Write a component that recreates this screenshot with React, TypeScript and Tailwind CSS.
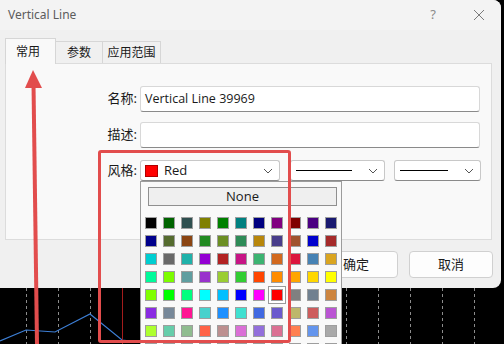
import React from "react";

const palette = [
  ["#000000", "#006400", "#2F4F4F", "#808000", "#008000", "#008080", "#000080", "#800080", "#800000", "#4B0082", "#191970"],
  ["#00008B", "#556B2F", "#8B4513", "#228B22", "#6B8E23", "#2E8B57", "#B8860B", "#483D8B", "#A0522D", "#0000CD", "#A52A2A"],
  ["#00CED1", "#696969", "#20B2AA", "#9400D3", "#B22222", "#C71585", "#3CB371", "#D2691E", "#DC143C", "#4682B4", "#DAA520"],
  ["#00FA9A", "#7CFC00", "#5F9EA0", "#9932CC", "#9ACD32", "#32CD32", "#FF4500", "#FF8C00", "#FFA500", "#FFD700", "#FFFF00"],
  ["#7FFF00", "#00FF00", "#00FF7F", "#00FFFF", "#00BFFF", "#0000FF", "#FF00FF", "#FF0000", "#808080", "#708090", "#CD853F"],
  ["#8A2BE2", "#778899", "#FF1493", "#48D1CC", "#1E90FF", "#40E0D0", "#4169E1", "#6A5ACD", "#BDB76B", "#CD5C5C", "#BA55D3"],
  ["#ADFF2F", "#66CDAA", "#8FBC8F", "#FF6347", "#BC8F8F", "#DA70D6", "#9370DB", "#DB7093", "#FF7F50", "#6495ED", "#A9A9A9"],
  ["#F4A460", "#B0C4DE", "#D2B48C", "#E9967A", "#DEB887", "#FF69B4", "#FA8072", "#EE82EE", "#F08080", "#87CEEB", "#FFA07A"],
];

const gridX = [26, 58, 90, 122, 154, 186, 218, 250, 282, 314, 346, 378, 410, 442, 474];

function Chevron() {
  return (
    <svg width="10" height="6" viewBox="0 0 10 6" className="shrink-0">
      <path d="M1 1 L5 5 L9 1" fill="none" stroke="#555" strokeWidth="1" />
    </svg>
  );
}

function LineSelect({ width, line }: { width: string; line: string }) {
  return (
    <div className={`${width} h-[21px] bg-white border border-[#c8c8c8] border-b-[#8a8a8a] rounded-[3px] flex items-center pl-[5px] pr-[6px] gap-2`}>
      <div className={`${line} h-px bg-black`} />
      <div className="flex-1" />
      <Chevron />
    </div>
  );
}

export default function App() {
  return (
    <div className="relative w-[504px] h-[344px] overflow-hidden bg-black font-['Noto_Sans','Noto_Sans_CJK_SC',sans-serif] text-[#1a1a1a]">
      {/* dialog */}
      <div className="w-[501px] h-[288px] bg-[#f0f0f0] rounded-tr-[8px] rounded-br-[8px] flex flex-col">
        {/* title bar */}
        <div className="h-[30px] bg-[#f3f3f3] rounded-tr-[8px] flex items-center pl-[8px] pr-[16px]">
          <span className="text-[12px] text-[#5c5c5c]">Vertical Line</span>
          <div className="flex-1" />
          <span className="text-[13px] text-[#8a8a8a] mr-[37px]">?</span>
          <svg width="12" height="12" viewBox="0 0 12 12">
            <path d="M1 1 L11 11 M11 1 L1 11" stroke="#7a7a7a" strokeWidth="1" />
          </svg>
        </div>

        {/* tabs */}
        <div className="h-[33px] flex items-end pl-[5px] text-[12px]">
          <div className="relative z-10 -mb-px w-[51px] h-[26px] bg-[#f9f9f9] border border-b-0 border-[#d6d6d6] flex items-center justify-center pr-[5px]">
            常用
          </div>
          <div className="w-[47px] h-[22px] bg-[#f0f0f0] border border-l-0 border-[#d6d6d6] border-b-0 flex items-center justify-center">
            参数
          </div>
          <div className="w-[58px] h-[22px] bg-[#f0f0f0] border border-l-0 border-[#d6d6d6] border-b-0 flex items-center justify-center">
            应用范围
          </div>
        </div>

        {/* panel */}
        <div className="mx-[5px] w-[487px] h-[177px] bg-[#f9f9f9] border border-[#dcdcdc] pt-[22px] flex flex-col text-[13px]">
          <div className="flex items-center">
            <span className="w-[133px] text-right pr-[2px]">名称:</span>
            <div className="ml-[1px] w-[340px] h-[26px] bg-white border border-[#d8d8d8] border-b-[#8a8a8a] rounded-[3px] flex items-center pl-[4px] text-[12.5px] font-['Open_Sans','Noto_Sans',sans-serif]">
              Vertical Line 39969
            </div>
          </div>
          <div className="flex items-center mt-[10px]">
            <span className="w-[133px] text-right pr-[2px]">描述:</span>
            <div className="ml-[1px] w-[340px] h-[26px] bg-white border border-[#d8d8d8] border-b-[#8a8a8a] rounded-[3px]" />
          </div>
          <div className="flex items-center mt-[12px]">
            <span className="w-[133px] text-right pr-[2px]">风格:</span>
            <div className="ml-[1px] w-[140px] h-[21px] bg-white border border-[#c8c8c8] border-b-[#8a8a8a] rounded-[3px] flex items-center pl-[4px] pr-[6px]">
              <div className="w-[13px] h-[12px] bg-[#ff0000] border border-[#b00000]" />
              <span className="ml-[6px] text-[13px] font-['Open_Sans','Noto_Sans',sans-serif]">Red</span>
              <div className="flex-1" />
              <Chevron />
            </div>
            <div className="ml-[10px]">
              <LineSelect width="w-[95px]" line="w-[64px]" />
            </div>
            <div className="ml-[9px]">
              <LineSelect width="w-[87px]" line="w-[58px]" />
            </div>
          </div>
        </div>

        {/* buttons */}
        <div className="mt-[11px] flex justify-end gap-[11px] pr-[8px] text-[13px]">
          <button className="w-[84px] h-[27px] bg-[#fdfdfd] border border-[#d0d0d0] rounded-[4px]">确定</button>
          <button className="w-[84px] h-[27px] bg-[#fdfdfd] border border-[#d0d0d0] rounded-[4px]">取消</button>
        </div>
      </div>

      {/* chart below the dialog */}
      <svg width="504" height="56" className="block">
        {gridX.map((x) => (
          <line key={x} x1={x + 0.5} y1="0" x2={x + 0.5} y2="56" stroke="#8c8c8c" strokeDasharray="3 3" />
        ))}
        <polyline points="0,53 26,42 55,44 90,26 122,52 140,54" fill="none" stroke="#3d7fd6" strokeWidth="1.2" />
        <line x1="122.5" y1="0" x2="122.5" y2="56" stroke="#a41c1c" />
      </svg>

      {/* color popup */}
      <div className="absolute left-[140px] top-[181px] w-[202px] h-[170px] bg-[#f9f9f9] border border-[#9c9c9c] pl-[1px] pt-[5px]">
        <div className="ml-[6px] w-[189px] h-[19px] bg-[#efefef] border border-[#8f8f8f] flex items-center justify-center text-[13px] font-['Open_Sans','Noto_Sans',sans-serif]">
          None
        </div>
        <div className="mt-[8px] grid grid-cols-[repeat(11,18px)] grid-rows-[repeat(8,18px)]">
          {palette.flatMap((row, r) =>
            row.map((c, i) => {
              const selected = r === 4 && i === 7;
              return (
                <div
                  key={`${r}-${i}`}
                  className={`w-[18px] h-[18px] flex items-center justify-center ${selected ? "bg-white border border-[#9a9a9a]" : ""}`}
                >
                  <div className="w-[12px] h-[12px] border border-[#9e9e9e]" style={{ backgroundColor: c }} />
                </div>
              );
            })
          )}
        </div>
      </div>

      {/* annotation: red frame */}
      <div className="absolute left-[98px] top-[150px] w-[193px] h-[193px] border-[3px] border-[#e24d4d] rounded-[3px]" />

      {/* annotation: red arrow */}
      <svg width="60" height="344" className="absolute left-0 top-0">
        <line x1="33.5" y1="84" x2="37" y2="344" stroke="#e24d4d" strokeWidth="4" />
        <polygon points="33,70 25,88 42,88" fill="#e24d4d" />
      </svg>
    </div>
  );
}
